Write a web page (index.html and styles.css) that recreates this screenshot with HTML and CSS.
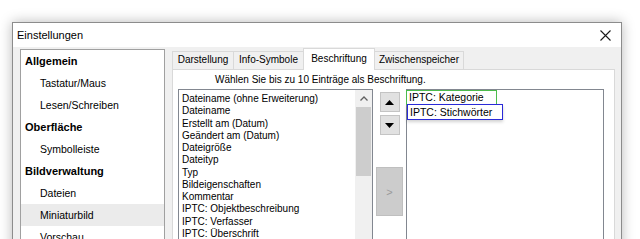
FILE: index.html
```html
<!DOCTYPE html>
<html lang="de">
<head>
<meta charset="utf-8">
<title>Einstellungen</title>
<link rel="stylesheet" href="styles.css">
</head>
<body>
<div class="window">
  <div class="titlebar">
    <span class="title">Einstellungen</span>
    <svg class="close" width="11" height="11" viewBox="0 0 11 11"><path d="M0.5 0.5 L10.5 10.5 M10.5 0.5 L0.5 10.5" stroke="#1a1a1a" stroke-width="1.1" fill="none"/></svg>
  </div>
  <div class="content">
    <div class="sidebar">
      <div class="nav-group">Allgemein</div>
      <div class="nav-item">Tastatur/Maus</div>
      <div class="nav-item">Lesen/Schreiben</div>
      <div class="nav-group">Oberfläche</div>
      <div class="nav-item">Symbolleiste</div>
      <div class="nav-group">Bildverwaltung</div>
      <div class="nav-item">Dateien</div>
      <div class="nav-item selected">Miniaturbild</div>
      <div class="nav-item">Vorschau</div>
    </div>
    <div class="tabs">
      <div class="tabstrip">
        <div class="tab t1">Darstellung</div>
        <div class="tab t2">Info-Symbole</div>
        <div class="tab t3 active">Beschriftung</div>
        <div class="tab t4">Zwischenspeicher</div>
      </div>
      <div class="panel">
        <div class="caption">Wählen Sie bis zu 10 Einträge als Beschriftung.</div>
        <div class="lists">
          <div class="listbox left">
            <div class="items">
              <div>Dateiname (ohne Erweiterung)</div>
              <div>Dateiname</div>
              <div>Erstellt am (Datum)</div>
              <div>Geändert am (Datum)</div>
              <div>Dateigröße</div>
              <div>Dateityp</div>
              <div>Typ</div>
              <div>Bildeigenschaften</div>
              <div>Kommentar</div>
              <div>IPTC: Objektbeschreibung</div>
              <div>IPTC: Verfasser</div>
              <div>IPTC: Überschrift</div>
              <div>IPTC: Schlagwörter</div>
            </div>
            <div class="scrollbar">
              <div class="sb-arrow"><svg width="8" height="5" viewBox="0 0 8 5"><path d="M0.5 4.5 L4 1 L7.5 4.5" stroke="#606060" stroke-width="1.3" fill="none"/></svg></div>
              <div class="sb-thumb"></div>
            </div>
          </div>
          <div class="buttons">
            <div class="btn small"><svg width="9" height="5" viewBox="0 0 9 5"><path d="M0 5 L4.5 0 L9 5 Z" fill="#000"/></svg></div>
            <div class="btn small"><svg width="9" height="5" viewBox="0 0 9 5"><path d="M0 0 L9 0 L4.5 5 Z" fill="#000"/></svg></div>
            <div class="btn big">&gt;</div>
          </div>
          <div class="listbox right">
            <div class="sel green">IPTC: Kategorie</div>
            <div class="sel blue">IPTC: Stichwörter</div>
          </div>
        </div>
      </div>
    </div>
  </div>
</div>
</body>
</html>
```
FILE: styles.css
```css
html, body {
  margin: 0;
  padding: 0;
  background: #ffffff;
  width: 640px;
  height: 239px;
  overflow: hidden;
  font-family: "Liberation Sans", Arial, sans-serif;
  color: #000;
}
.window {
  margin: 22px 0 0 12px;
  width: 608px;
  height: 240px;
  border: 1px solid #8c8c8c;
  background: #f0f0f0;
  box-shadow: 0 0 12px rgba(0,0,0,0.28);
}
.titlebar {
  height: 24px;
  background: #ffffff;
  display: flex;
  align-items: center;
  justify-content: space-between;
  padding: 0 10px 0 4px;
}
.title {
  font-size: 11px;
}
.close {
  display: block;
}
.content {
  display: flex;
  align-items: flex-start;
  padding: 2px 0 0 7px;
}
.sidebar {
  width: 143px;
  height: 200px;
  background: #fff;
  border: 1px solid #a0a0a0;
  font-size: 10.5px;
}
.nav-group, .nav-item {
  height: 22px;
  line-height: 22px;
  white-space: nowrap;
}
.nav-group {
  font-weight: bold;
  font-size: 11px;
  padding-left: 4px;
}
.nav-item {
  padding-left: 19px;
}
.nav-item.selected {
  background: #ebebeb;
}
.tabs {
  margin-left: 7px;
  width: 443px;
  font-size: 10px;
}
.tabstrip {
  display: flex;
  align-items: flex-end;
  height: 20px;
  position: relative;
  z-index: 1;
}
.tab {
  box-sizing: border-box;
  height: 18px;
  line-height: 16px;
  border: 1px solid #d9d9d9;
  border-bottom: none;
  background: #f0f0f0;
  text-align: center;
  margin-left: -1px;
}
.tab.t1 { width: 62px; margin-left: 0; }
.tab.t2 { width: 71px; }
.tab.t3 { width: 72px; }
.tab.t4 { width: 90px; }
.tab.active {
  height: 22px;
  line-height: 19px;
  background: #fff;
  margin-bottom: -1px;
}
.panel {
  box-sizing: border-box;
  height: 180px;
  background: #fff;
  border: 1px solid #d9d9d9;
}
.caption {
  height: 19px;
  line-height: 20px;
  padding-left: 42px;
  white-space: nowrap;
}
.lists {
  display: flex;
  align-items: flex-start;
  padding-left: 5px;
}
.listbox {
  box-sizing: border-box;
  height: 170px;
  border: 1px solid #828790;
  background: #fff;
}
.listbox.left {
  width: 195px;
  display: flex;
}
.items {
  flex: 1;
  padding: 3px 0 0 3px;
  line-height: 12.25px;
  white-space: nowrap;
  overflow: hidden;
}
.scrollbar {
  width: 17px;
  background: #f0f0f0;
  display: flex;
  flex-direction: column;
}
.sb-arrow {
  height: 17px;
  display: flex;
  align-items: center;
  justify-content: center;
}
.sb-thumb {
  height: 69px;
  margin: 0 1px;
  background: #cdcdcd;
}
.buttons {
  width: 33px;
  display: flex;
  flex-direction: column;
  align-items: center;
  padding-top: 3px;
}
.btn {
  box-sizing: border-box;
  display: flex;
  align-items: center;
  justify-content: center;
  background: #e1e1e1;
  border: 1px solid #c4c4c4;
}
.btn.small {
  width: 20px;
  height: 20px;
  margin-bottom: 3px;
}
.btn.big {
  width: 27px;
  height: 49px;
  margin-top: 29px;
  background: #cccccc;
  border-color: #bfbfbf;
  color: #9a9a9a;
  font-size: 11px;
}
.listbox.right {
  width: 198px;
}
.sel {
  box-sizing: border-box;
  width: fit-content;
  padding: 0 10px 0 2px;
  font-size: 10.5px;
  white-space: nowrap;
  background: #fff;
}
.sel.green {
  height: 15px;
  line-height: 13px;
  border: 1px solid #4cbb4c;
  margin: 0 0 0 -1px;
  padding-right: 12px;
}
.sel.blue {
  height: 16px;
  line-height: 14px;
  border: 1px solid #2a2ad8;
  margin-top: -1px;
  box-shadow: 0 2px 3px rgba(0,0,0,0.18);
}
```
